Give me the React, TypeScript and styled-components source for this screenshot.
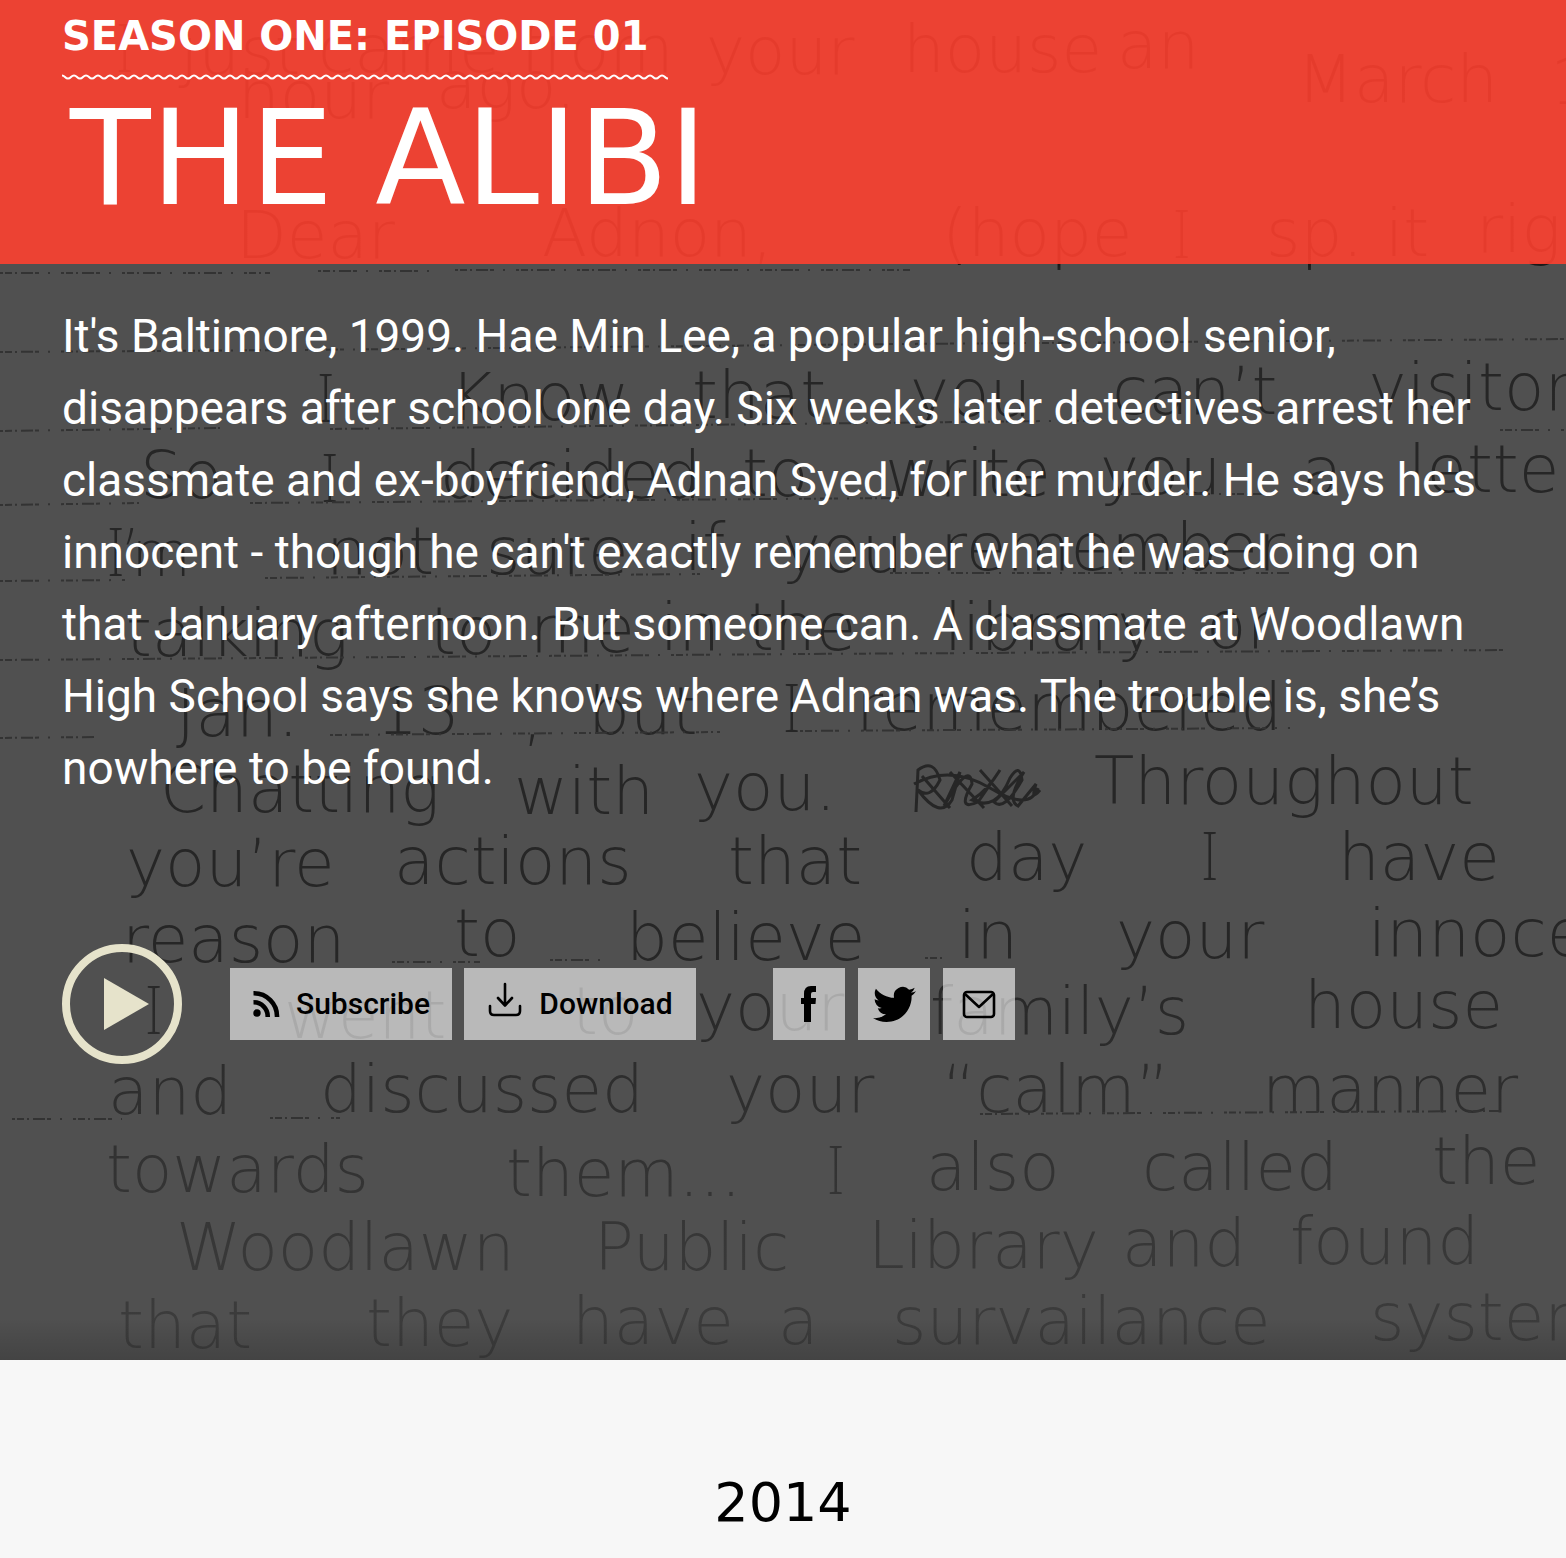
import React from 'react';
import styled, { createGlobalStyle } from 'styled-components';

const GlobalStyle = createGlobalStyle`
  *, *::before, *::after { box-sizing: border-box; }
  body { margin: 0; background: #f7f7f7; font-family: Roboto, "Liberation Sans", sans-serif; }
`;

const Hero = styled.article`
  position: relative;
  isolation: isolate;
  overflow: hidden;
  background: #505050;
  color: #fff;
`;

const LetterArt = styled.svg`
  position: absolute;
  inset: 0;
  z-index: -1;
  width: 100%;
  height: 100%;
  font-family: "DejaVu Sans", sans-serif;
  font-weight: 200;
  font-size: 66px;
`;

const HandWord = styled.text<{ $barred: boolean }>`
  font-family: ${(p) => (p.$barred ? '"Noto Sans"' : '"DejaVu Sans"')}, sans-serif;
`;

const HeroHeader = styled.header`
  padding: 8px 62px 36px;
  background: rgba(253, 64, 48, 0.9);
`;

const EpisodeLabel = styled.p`
  width: fit-content;
  margin: 0;
  padding-right: 20px;
  font: 700 40px/56px "DejaVu Sans", sans-serif;
`;

const Wave = styled.svg`
  display: block;
  width: calc(100% + 20px);
  height: 6px;
  margin-top: 10px;
`;

const Title = styled.h1`
  margin: 8px 0 0;
  padding-left: 8px;
  font: 400 132px/140px "DejaVu Sans", sans-serif;
`;

const HeroBody = styled.div`
  padding: 36px 62px 296px;
`;

const Summary = styled.p`
  margin: 0 0 140px;
  font-size: 46px;
  font-weight: 400;
  line-height: 72px;
`;

const Actions = styled.div`
  display: flex;
  flex-wrap: wrap;
  align-items: center;
`;

const PlayButton = styled.button`
  display: grid;
  place-items: center;
  width: 120px;
  height: 120px;
  margin: 0 48px 0 0;
  padding: 0;
  border: 8px solid #e6e3cb;
  border-radius: 50%;
  background: none;
  cursor: pointer;
`;

const ButtonGroup = styled.div<{ $gap: number }>`
  display: flex;
  gap: ${(p) => p.$gap}px;
  & + & { margin-left: 77px; }
`;

const tile = `
  display: flex;
  align-items: center;
  justify-content: center;
  height: 72px;
  background: rgba(255, 255, 255, 0.6);
  color: #000;
  text-decoration: none;
`;

const ActionLink = styled.a<{ $width: number }>`
  ${tile}
  gap: 16px;
  min-width: ${(p) => p.$width}px;
  font-size: 30px;
  font-weight: 500;
  line-height: 36px;
`;

const ShareLink = styled.a`
  ${tile}
  width: 72px;
`;

const YearSection = styled.section`
  padding: 112px 62px 24px;
  color: #000;
  text-align: center;
`;

const Year = styled.h2`
  margin: 0;
  font: 400 54px/62px "DejaVu Sans", sans-serif;
`;

type Word = [number, number, string];

const words: Word[] = [
  [115, 72, 'I'], [180, 74, 'just'], [318, 72, 'came'], [520, 72, 'from'], [706, 74, 'your'], [903, 72, 'house'], [1117, 68, 'an'], [1297, 102, 'March'], [1550, 104, '1'],
  [238, 118, 'hour'], [436, 108, 'ago.'],
  [236, 258, 'Dear'], [542, 256, 'Adnon,'], [942, 256, '(hope'], [1172, 258, 'I'], [1266, 256, 'sp.'], [1385, 256, 'it'], [1476, 252, 'right'],
  [316, 422, 'I'], [450, 420, 'Know'], [692, 418, 'that'], [910, 416, 'you'], [1112, 414, 'can’t'], [1368, 410, 'visitors'],
  [140, 498, 'So'], [320, 502, 'I'], [440, 498, 'decided'], [742, 496, 'to'], [885, 496, 'write'], [1100, 494, 'you'], [1302, 494, 'a'], [1408, 492, 'letter'],
  [106, 576, 'I’m'], [326, 574, 'not'], [486, 574, 'sure'], [684, 570, 'if'], [782, 572, 'you'], [940, 570, 'remember'],
  [126, 656, 'talking'], [430, 654, 'to'], [530, 652, 'me'], [660, 650, 'in'], [748, 650, 'the'], [944, 650, 'library'], [1206, 648, 'or'],
  [176, 736, 'Jan.'], [376, 734, '13'], [522, 738, ','], [588, 734, 'but'], [782, 732, 'I'], [856, 730, 'remembered'],
  [160, 812, 'Chatting'], [514, 814, 'with'], [694, 810, 'you.'], [1094, 804, 'Throughout'],
  [126, 886, 'you’re'], [394, 884, 'actions'], [728, 884, 'that'], [966, 880, 'day'], [1200, 880, 'I'], [1338, 880, 'have'],
  [122, 962, 'reason'], [454, 956, 'to'], [626, 960, 'believe'], [958, 958, 'in'], [1116, 958, 'your'], [1368, 956, 'innocence'],
  [144, 1034, 'I'], [284, 1038, 'went'], [572, 1034, 'to'], [696, 1030, 'your'], [930, 1034, 'family’s'], [1304, 1028, 'house'],
  [108, 1114, 'and'], [320, 1112, 'discussed'], [726, 1112, 'your'], [942, 1112, '“calm”'], [1262, 1112, 'manner'],
  [106, 1192, 'towards'], [506, 1196, 'them...'], [826, 1194, 'I'], [926, 1190, 'also'], [1142, 1190, 'called'], [1432, 1184, 'the'],
  [176, 1270, 'Woodlawn'], [594, 1270, 'Public'], [868, 1268, 'Library'], [1122, 1266, 'and'], [1290, 1264, 'found'],
  [118, 1348, 'that'], [366, 1346, 'they'], [572, 1344, 'have'], [778, 1344, 'a'], [892, 1344, 'survailance'], [1370, 1340, 'system'],
];

const rules = [
  'M0 273 H270 M318 271 H430 M455 270 H910',
  'M0 352 L300 350 L900 344 L1566 339',
  'M0 431 L220 428 M330 429 L1140 420 M1500 430 H1566',
  'M0 505 L140 503 M250 503 L900 498 M1110 494 H1280',
  'M0 581 L125 580 M265 578 L700 574 M890 573 H1290',
  'M0 660 L800 654 L1510 650',
  'M0 738 L95 737 M330 735 L720 732 M800 731 L1290 728',
  'M392 962 H480 M550 960 H600 M925 958 H945',
  'M12 1119 H122 M270 1118 H340 M980 1114 L1500 1111',
];

const LetterBackground = () => (
  <LetterArt viewBox="0 0 1566 1360" preserveAspectRatio="xMinYMin slice" aria-hidden="true">
    <defs>
      <linearGradient id="ink" gradientUnits="userSpaceOnUse" x1="0" y1="0" x2="0" y2="1360">
        <stop offset="0" stopColor="#101010" />
        <stop offset="0.19" stopColor="#101010" />
        <stop offset="0.2" stopColor="#262626" />
        <stop offset="0.7" stopColor="#262626" />
        <stop offset="1" stopColor="#3e3e3e" />
      </linearGradient>
      <linearGradient id="foot" x1="0" y1="0" x2="0" y2="1">
        <stop offset="0" stopColor="#000" stopOpacity="0" />
        <stop offset="1" stopColor="#000" stopOpacity="0.16" />
      </linearGradient>
    </defs>
    <g fill="url(#ink)">
      {words.map(([x, y, word]) => (
        <HandWord key={`${x}-${y}`} x={x} y={y} $barred={word.startsWith('I')}>{word}</HandWord>
      ))}
    </g>
    <g fill="none" stroke="#333" strokeWidth="2" strokeDasharray="3 2 7 3 2 4 12 2 4 9 2 11">
      {rules.map((d) => <path key={d} d={d} />)}
    </g>
    <path
      d="M916 812 L918 770 Q934 758 940 780 Q930 800 918 790 Q940 820 952 800 L960 772 L944 806 Q970 760 972 784 Q956 812 978 802 L1000 770 Q988 790 972 800 Q996 812 1010 778 Q1020 762 1022 780 Q1004 812 994 802 L1024 772 Q1006 800 1018 806 L1036 784 Q1030 802 1040 790 M914 784 Q950 764 990 788 T1038 788 M922 776 L950 808 M950 772 L984 808 M980 770 L1012 806"
      fill="none"
      stroke="#262626"
      strokeWidth="3"
    />
    <rect y="1318" width="1566" height="42" fill="url(#foot)" />
  </LetterArt>
);

const WaveRule = () => (
  <Wave aria-hidden="true">
    <defs>
      <pattern id="wave" width="12" height="6" patternUnits="userSpaceOnUse">
        <path d="M-3 3 Q0 0 3 3 T9 3 T15 3" fill="none" stroke="#fff" strokeWidth="2" />
      </pattern>
    </defs>
    <rect width="100%" height="6" fill="url(#wave)" />
  </Wave>
);

const PlayIcon = () => (
  <svg width="54" height="52" viewBox="0 0 54 52" aria-hidden="true">
    <path d="M9 0 L54 26 L9 52Z" fill="#e6e3cb" />
  </svg>
);

const RssIcon = () => (
  <svg width="28" height="28" viewBox="0 0 28 28" fill="none" stroke="#000" strokeWidth="4.6" aria-hidden="true">
    <circle cx="5" cy="23" r="3.7" fill="#000" stroke="none" />
    <path d="M1.500 12.300 A14 14 0 0 1 15.700 27 M1.500 3.300 A23 23 0 0 1 25 27" />
  </svg>
);

const DownloadIcon = () => (
  <svg width="36" height="44" viewBox="0 0 36 44" fill="none" stroke="#000" strokeWidth="2.6" strokeLinecap="round" strokeLinejoin="round" aria-hidden="true">
    <path d="M18 2 V23 M11 16 L18 23.500 L25 16 M3 24 V29 Q3 33 7 33 H29 Q33 33 33 29 V24" />
  </svg>
);

const FacebookIcon = () => (
  <svg width="18" height="36" viewBox="0 0 18 36" aria-hidden="true">
    <path d="M4 36 V18 H1 V12 H4 V8 Q4 0 11 0 H16 V6 H13 Q11 6 11 8 V12 H16 L15.500 18 H11 V36Z" />
  </svg>
);

const TwitterIcon = () => (
  <svg width="43" height="43" viewBox="0 0 24 24" aria-hidden="true">
    <path d="M23.950 4.570a10 10 0 0 1-2.820.770 4.960 4.960 0 0 0 2.160-2.720c-.950.550-2.010.950-3.130 1.180a4.920 4.920 0 0 0-8.380 4.480C7.690 8.090 4.070 6.130 1.640 3.160a4.820 4.820 0 0 0-.670 2.480c0 1.710.870 3.210 2.190 4.100a4.900 4.900 0 0 1-2.230-.620v.060a4.920 4.920 0 0 0 3.950 4.830 5 5 0 0 1-2.210.080 4.940 4.940 0 0 0 4.600 3.420A9.870 9.870 0 0 1 0 19.540a13.990 13.990 0 0 0 7.550 2.210c9.050 0 14-7.500 14-13.980 0-.210 0-.420-.020-.630a9.940 9.940 0 0 0 2.460-2.550z" />
  </svg>
);

const MailIcon = () => (
  <svg width="34" height="30" viewBox="0 0 34 30" fill="none" stroke="#000" strokeWidth="2.6" strokeLinejoin="round" aria-hidden="true">
    <rect x="2" y="3" width="30" height="25" rx="3" />
    <path d="M3 5 L17 18 L31 5" />
  </svg>
);

export default function App() {
  return (
    <>
      <GlobalStyle />
      <main>
        <Hero>
          <LetterBackground />
          <HeroHeader>
            <EpisodeLabel>
              SEASON ONE: EPISODE 01
              <WaveRule />
            </EpisodeLabel>
            <Title>THE ALIBI</Title>
          </HeroHeader>
          <HeroBody>
            <Summary>
              It's Baltimore, 1999. Hae Min Lee, a popular high-school senior, disappears after school one day. Six
              weeks later detectives arrest her classmate and ex-boyfriend, Adnan Syed, for her murder. He says he's
              innocent - though he can't exactly remember what he was doing on that January afternoon. But someone
              can. A classmate at Woodlawn High School says she knows where Adnan was. The trouble is, she’s nowhere to
              be found.
            </Summary>
            <Actions>
              <PlayButton type="button" aria-label="Play episode">
                <PlayIcon />
              </PlayButton>
              <ButtonGroup $gap={12}>
                <ActionLink href="#subscribe" $width={222}>
                  <RssIcon />
                  Subscribe
                </ActionLink>
                <ActionLink href="#download" $width={232}>
                  <DownloadIcon />
                  Download
                </ActionLink>
              </ButtonGroup>
              <ButtonGroup $gap={13}>
                <ShareLink href="#facebook" aria-label="Share on Facebook">
                  <FacebookIcon />
                </ShareLink>
                <ShareLink href="#twitter" aria-label="Share on Twitter">
                  <TwitterIcon />
                </ShareLink>
                <ShareLink href="#email" aria-label="Share by email">
                  <MailIcon />
                </ShareLink>
              </ButtonGroup>
            </Actions>
          </HeroBody>
        </Hero>
        <YearSection>
          <Year>2014</Year>
        </YearSection>
      </main>
    </>
  );
}
